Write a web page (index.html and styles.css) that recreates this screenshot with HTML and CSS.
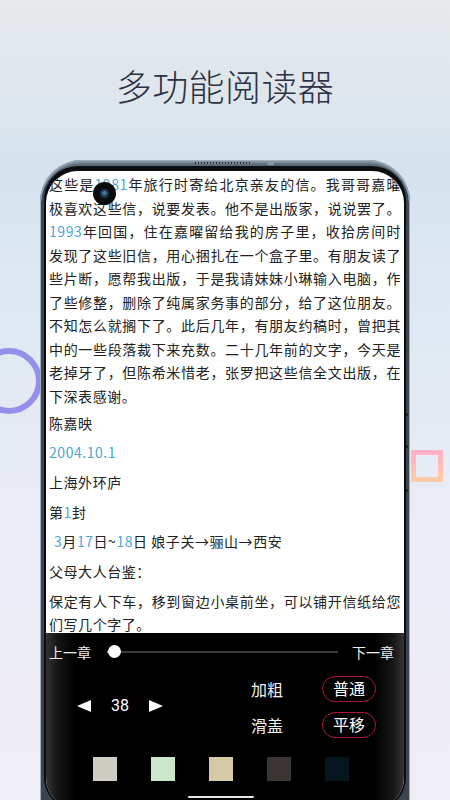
FILE: index.html
```html
<!DOCTYPE html>
<html lang="zh-CN">
<head>
<meta charset="utf-8">
<title>多功能阅读器</title>
<link rel="stylesheet" href="styles.css">
</head>
<body>
<div class="page">
  <div class="ring"></div>
  <div class="square"></div>
  <h1 class="title">多功能阅读器</h1>
  <div class="phone">
    <div class="grille"></div>
    <div class="sensor"></div>
    <div class="side-mark m1"></div>
    <div class="side-mark m2"></div>
    <div class="side-mark m3"></div>
    <div class="screen">
      <div class="camera"><div class="lens"></div></div>
      <div class="article">
        <p class="para first">
          <span class="ln">这些是<span class="num">1981</span>年旅行时寄给北京亲友的信。我哥哥嘉曜</span>
          <span class="ln">极喜欢这些信，说要发表。他不是出版家，说说罢了。</span>
          <span class="ln"><span class="num">1993</span>年回国，住在嘉曜留给我的房子里，收拾房间时</span>
          <span class="ln">发现了这些旧信，用心捆扎在一个盒子里。有朋友读了</span>
          <span class="ln">些片断，愿帮我出版，于是我请妹妹小琳输入电脑，作</span>
          <span class="ln">了些修整，删除了纯属家务事的部分，给了这位朋友。</span>
          <span class="ln">不知怎么就搁下了。此后几年，有朋友约稿时，曾把其</span>
          <span class="ln">中的一些段落裁下来充数。二十几年前的文字，今天是</span>
          <span class="ln">老掉牙了，但陈希米惜老，张罗把这些信全文出版，在</span>
          <span class="ln last">下深表感谢。</span>
        </p>
        <p class="para">陈嘉映</p>
        <p class="para num">2004.10.1</p>
        <p class="para">上海外环庐</p>
        <p class="para">第<span class="num">1</span>封</p>
        <p class="para indent"><span class="num">3</span>月<span class="num">17</span>日~<span class="num">18</span>日 娘子关→骊山→西安</p>
        <p class="para">父母大人台鉴：</p>
        <p class="para">
          <span class="ln">保定有人下车，移到窗边小桌前坐，可以铺开信纸给您</span>
          <span class="ln last">们写几个字了。</span>
        </p>
      </div>
      <div class="panel">
        <div class="chapter-row">
          <span class="chapter">上一章</span>
          <div class="slider">
            <div class="progress"></div>
            <div class="knob"></div>
          </div>
          <span class="chapter">下一章</span>
        </div>
        <div class="settings">
          <div class="size-group">
            <span class="tri tri-left"></span>
            <span class="size-num">38</span>
            <span class="tri tri-right"></span>
          </div>
          <div class="option-group">
            <div class="option-row">
              <span class="opt-label">加粗</span>
              <span class="opt-btn">普通</span>
            </div>
            <div class="option-row">
              <span class="opt-label">滑盖</span>
              <span class="opt-btn">平移</span>
            </div>
          </div>
        </div>
        <div class="swatches">
          <span class="swatch s1"></span>
          <span class="swatch s2"></span>
          <span class="swatch s3"></span>
          <span class="swatch s4"></span>
          <span class="swatch s5"></span>
        </div>
        <div class="home-bar"></div>
      </div>
    </div>
  </div>
</div>
</body>
</html>
```

FILE: styles.css
```css
html, body {
  margin: 0;
  padding: 0;
}

.page {
  position: relative;
  width: 450px;
  height: 800px;
  overflow: hidden;
  font-family: "Noto Sans CJK SC", "Noto Sans", sans-serif;
  background: linear-gradient(180deg, #e6e9ec 0%, #dfe7ec 11%, #d5e3ee 21%, #e0e9f3 42%, #eaecf6 65%, #f0eef5 100%);
}

.ring {
  position: absolute;
  left: -24px;
  top: 348px;
  width: 54px;
  height: 54px;
  border: 6px solid #948fe8;
  border-radius: 50%;
}

.square {
  position: absolute;
  left: 411px;
  top: 450px;
  width: 22px;
  height: 22px;
  border: 5px solid #ffb9c2;
  border-image: linear-gradient(180deg, #ffb2c5, #ffcaa8) 1;
}

.title {
  margin: 0;
  padding-top: 66px;
  font-size: 36px;
  line-height: 38px;
  font-weight: 300;
  color: #2c3245;
  text-align: center;
  letter-spacing: 0.4px;
}

.phone {
  position: relative;
  margin: 56px 0 0 40px;
  width: 370px;
  height: 648px;
  box-sizing: border-box;
  padding: 11px 6px 0;
  border-radius: 42px 42px 0 0;
  background: linear-gradient(180deg, #6a7885 0%, #3b4651 3%, #3a4550 100%);
  box-shadow: inset 0 0 0 1px #9fafbd, inset 0 2px 0 1px #7f90a0;
}

.grille {
  position: absolute;
  left: 155px;
  top: 2px;
  width: 57px;
  height: 2px;
  background: repeating-linear-gradient(90deg, #1f262d 0 1.5px, #7b8a97 1.5px 3px);
}

.sensor {
  position: absolute;
  left: 227px;
  top: 1px;
  width: 7px;
  height: 4px;
  border-radius: 1px;
  background: #8595a3;
}

.side-mark {
  position: absolute;
  right: 2px;
  width: 2px;
  height: 3px;
  background: #1b2229;
}

.m1 { top: 253px; }
.m2 { top: 285px; }
.m3 { top: 329px; }

.screen {
  position: relative;
  height: 637px;
  display: flex;
  flex-direction: column;
  overflow: hidden;
  background: #fff;
  border-radius: 32px 32px 30px 30px;
  box-shadow: 0 0 0 2px #0b0d10, 0 -3px 0 2px #0b0d10;
}

.camera {
  position: absolute;
  left: 47px;
  top: 11px;
  width: 23px;
  height: 23px;
  border-radius: 50%;
  background: #0a0b0d;
  display: flex;
  align-items: center;
  justify-content: center;
}

.lens {
  width: 9px;
  height: 9px;
  border-radius: 50%;
  background: radial-gradient(circle at 50% 45%, #4f7aa0 0 1.5px, #1f3d5e 2.5px, #15283d 100%);
}

.article {
  flex: 1;
  overflow: hidden;
  padding: 2px 3px 0 3px;
  color: #222222;
  font-size: 14px;
  line-height: 23.5px;
  letter-spacing: 0.55px;
}

.para {
  margin: 6.2px 0 0;
}

.para.first {
  margin-top: 0;
}

.para.first + .para {
  margin-top: 3.5px;
}

.ln {
  display: block;
  text-align: justify;
  text-align-last: justify;
}

.ln.last {
  text-align-last: left;
}

.num {
  color: #4ea6d6;
}

.indent {
  padding-left: 5px;
}

.panel {
  position: relative;
  flex: 0 0 175px;
  box-sizing: border-box;
  padding: 0 10px 0 3px;
  color: #f2f2f2;
  background: linear-gradient(90deg, #343434 0, #141414 12px, #000 30px, #000 calc(100% - 30px), #141414 calc(100% - 12px), #343434 100%);
}

.chapter-row {
  height: 38px;
  display: flex;
  align-items: center;
}

.chapter {
  font-size: 14px;
  line-height: 20px;
  color: #eeeeee;
}

.slider {
  position: relative;
  flex: 1;
  height: 2px;
  margin: 0 14px 0 16px;
  background: #3c3c3c;
}

.progress {
  width: 4px;
  height: 2px;
  background: #3fbf5a;
}

.knob {
  position: absolute;
  left: 1px;
  top: -6px;
  width: 13px;
  height: 13px;
  border-radius: 50%;
  background: #fff;
}

.settings {
  height: 72px;
  display: flex;
  align-items: center;
}

.size-group {
  display: flex;
  align-items: center;
  margin-left: 28px;
  margin-top: -2px;
}

.tri {
  width: 0;
  height: 0;
  border-top: 6.5px solid transparent;
  border-bottom: 6.5px solid transparent;
}

.tri-left {
  border-right: 14px solid #fff;
}

.tri-right {
  border-left: 14px solid #fff;
}

.size-num {
  width: 18px;
  margin: 0 20px;
  font-size: 16px;
  line-height: 20px;
  text-align: center;
  color: #fff;
  font-family: "Roboto", "Noto Sans", sans-serif;
}

.option-group {
  margin-left: auto;
  margin-right: 18px;
  display: flex;
  flex-direction: column;
}

.option-row {
  height: 36px;
  display: flex;
  align-items: center;
}

.opt-label {
  font-size: 16px;
  line-height: 20px;
  color: #f2f2f2;
}

.opt-btn {
  margin-left: 39px;
  width: 54px;
  height: 26px;
  box-sizing: border-box;
  border: 1.5px solid #a8173f;
  border-radius: 13px;
  font-size: 16px;
  line-height: 23px;
  text-align: center;
  color: #fff;
}

.swatches {
  display: flex;
  gap: 34.5px;
  margin: 14px 0 0 44px;
}

.swatch {
  width: 23.5px;
  height: 23.5px;
}

.s1 { background: #cfccc4; }
.s2 { background: #cae7cc; }
.s3 { background: #d5c9a6; }
.s4 { background: #3b3633; }
.s5 { background: #061621; }

.home-bar {
  position: absolute;
  left: 142px;
  top: 163px;
  width: 66px;
  height: 2px;
  border-radius: 1px;
  background: #e6e6e6;
}
```
